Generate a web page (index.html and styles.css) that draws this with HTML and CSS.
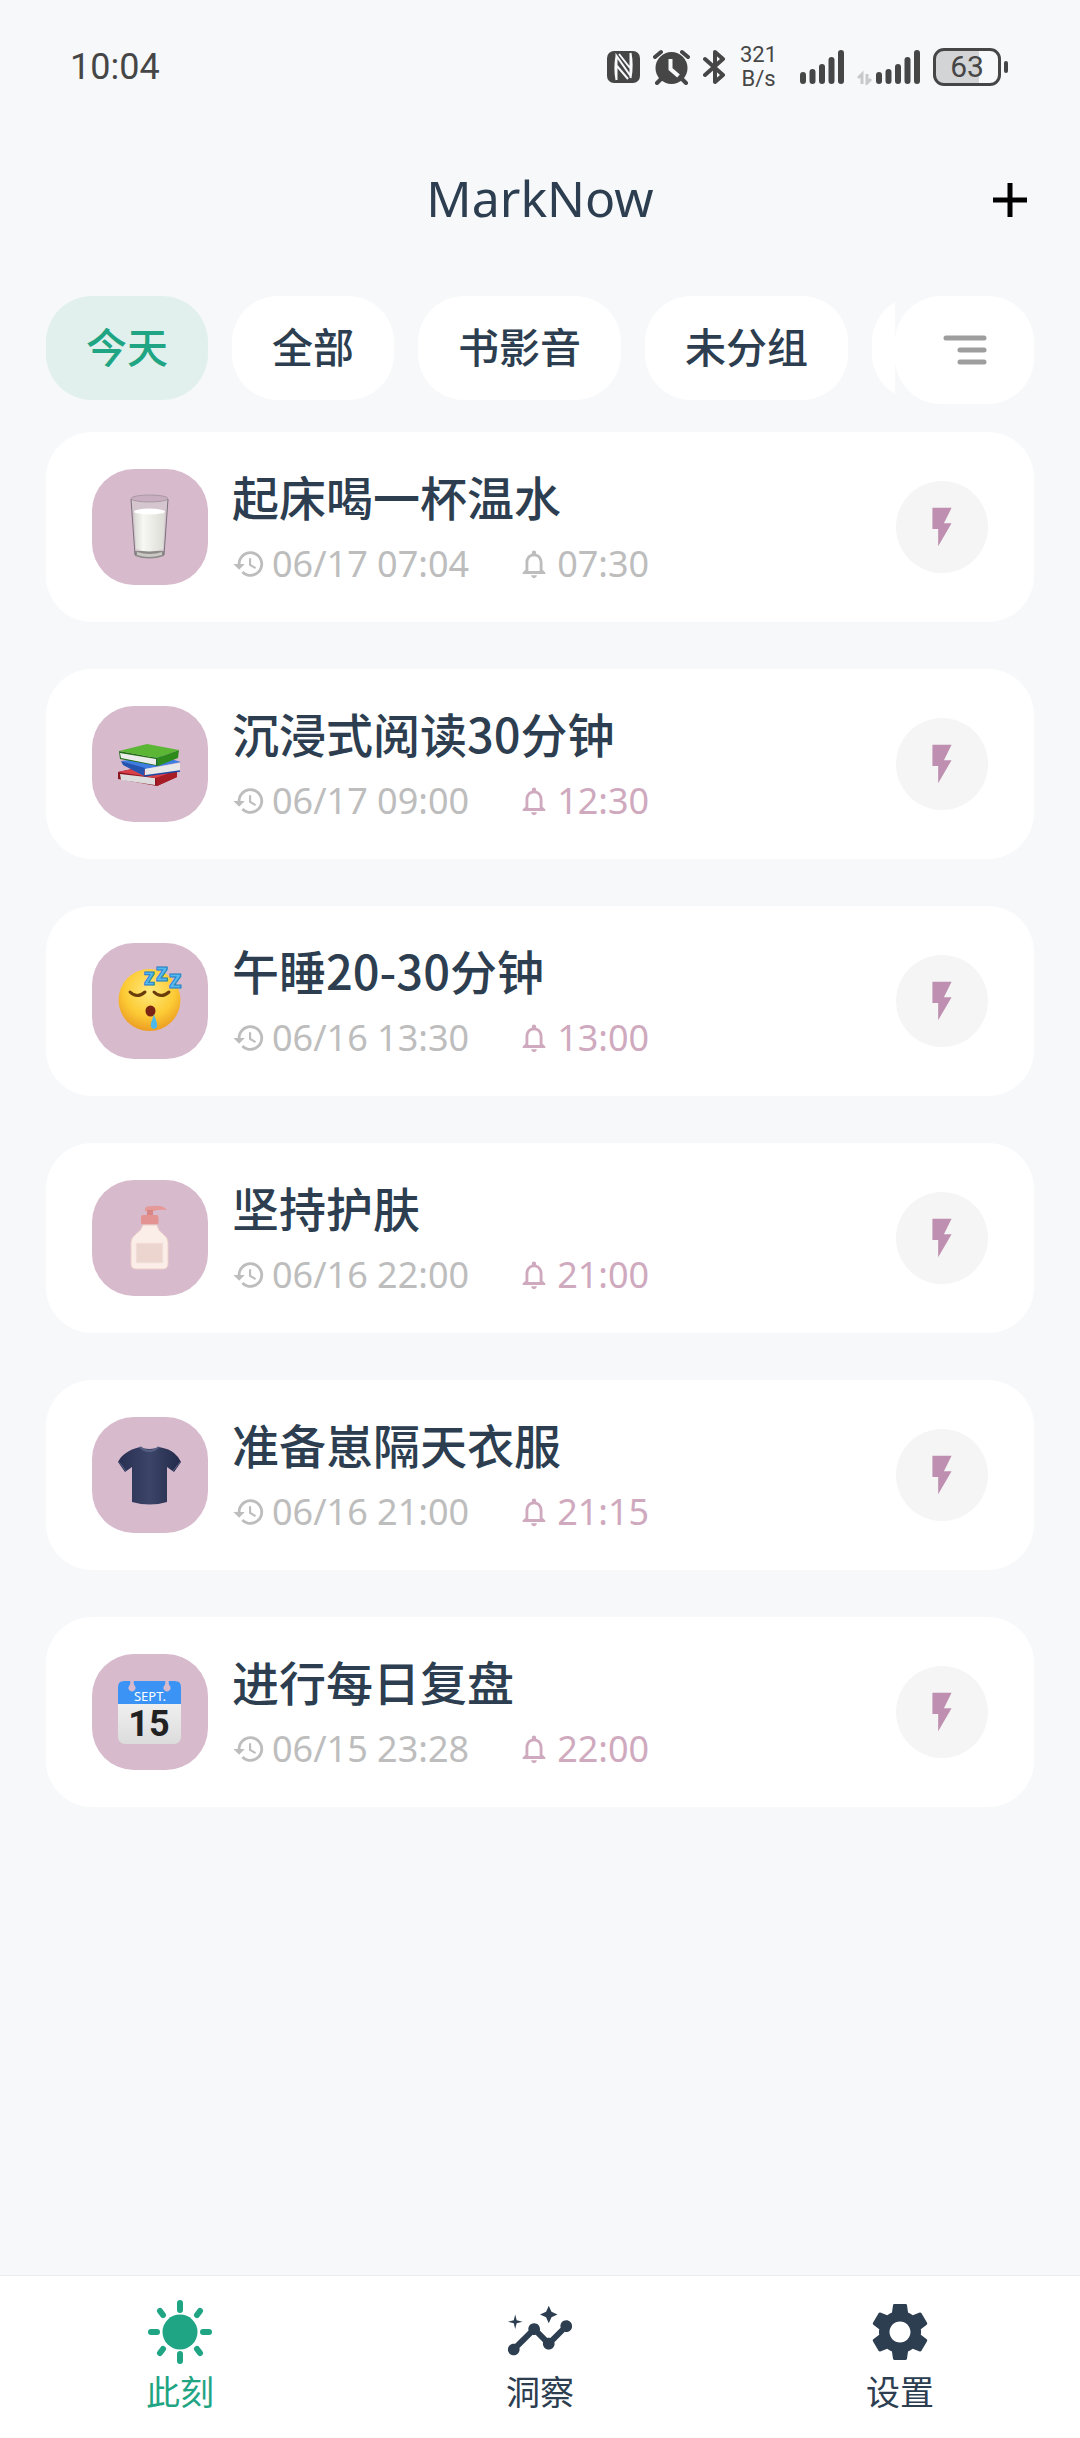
FILE: index.html
```html
<!DOCTYPE html>
<html lang="zh-CN">
<head>
<meta charset="utf-8">
<meta name="viewport" content="width=device-width, initial-scale=1">
<title>MarkNow</title>
<link rel="stylesheet" href="styles.css">
</head>
<body>
<svg class="defs" width="0" height="0" aria-hidden="true">
  <symbol id="i-history" viewBox="0 0 24 24"><path d="M13 3a9 9 0 0 0-9 9H1l3.9 3.9.1.1L9 12H6a7 7 0 1 1 2.05 4.94l-1.42 1.42A9 9 0 1 0 13 3zm-1 5v5l4.28 2.54.72-1.21-3.5-2.08V8z"/></symbol>
  <symbol id="i-bell" viewBox="0 0 24 24"><path d="M12 22c1.1 0 2-.9 2-2h-4c0 1.100.9 2 2 2zm6-6v-5c0-3.070-1.630-5.640-4.500-6.320V4c0-.83-.67-1.500-1.500-1.500s-1.500.67-1.500 1.500v.68C7.640 5.360 6 7.920 6 11v5l-2 2v1h16v-1l-2-2zm-2 1H8v-6c0-2.480 1.510-4.500 4-4.500s4 2.020 4 4.500v6z"/></symbol>
  <symbol id="i-bolt" viewBox="0 0 24 24"><path d="M7 2v11h3v9l7-12h-4l4-8z"/></symbol>
  <symbol id="i-bars" viewBox="0 0 44 36"><path d="M3 26v6M12.500 23v9M22 18v14M31.500 11v21M41 4v28" fill="none" stroke="currentColor" stroke-width="6" stroke-linecap="round"/></symbol>
</svg>

<div class="app">
  <div class="status">
    <span class="status-time">10:04</span>
    <div class="status-icons">
      <svg width="33" height="36" viewBox="0 0 33 36"><rect x="0" y="2" width="33" height="32" rx="7" fill="#464646"/><path d="M9.500 31V7L23.500 27M9.500 7C8 15 8 23 9.500 31M23.500 4v24M23.500 4c1.500 8 1.500 17 0 25M10 17l11 13M12 5l11 14" fill="none" stroke="#f7f9fa" stroke-width="2"/></svg>
      <svg width="37" height="36" viewBox="0 0 37 36"><circle cx="18.500" cy="19" r="16" fill="#464646"/><path d="M2 8l6-5M35 8l-6-5M8 30l-4 4M29 30l4 4" stroke="#464646" stroke-width="4" stroke-linecap="round"/><path d="M17.500 10v10l8 7" fill="none" stroke="#f7f9fa" stroke-width="4"/></svg>
      <svg width="24" height="36" viewBox="0 0 24 36"><path d="M2 10l18 16-8 7V3l8 7L2 26" fill="none" stroke="#464646" stroke-width="4" stroke-linejoin="round" stroke-linecap="round"/></svg>
      <span class="traffic">321<br>B/s</span>
      <svg width="44" height="36"><use href="#i-bars"/></svg>
      <svg width="63" height="36" viewBox="0 0 63 36"><path d="M5 35V25l-4 4M10 25v9l4-4" fill="none" stroke="#c8caca" stroke-width="3"/><use href="#i-bars" x="19" width="44" height="36"/></svg>
      <div class="battery"><div class="battery-cell">63</div><div class="battery-tip"></div></div>
    </div>
  </div>

  <header class="header">
    <h1>MarkNow</h1>
    <button class="add" aria-label="添加"><svg width="34" height="34" viewBox="0 0 34 34"><path d="M17 0v34M0 17h34" stroke="#000" stroke-width="5"/></svg></button>
  </header>

  <div class="filters">
    <div class="chips">
      <button class="chip chip-active">今天</button>
      <button class="chip">全部</button>
      <button class="chip">书影音</button>
      <button class="chip">未分组</button>
      <button class="chip" aria-label="分组"></button>
    </div>
    <button class="sort" aria-label="排序"><svg width="44" height="30" viewBox="0 0 44 30"><path d="M3 3h38M17 15h24M17 27h24" stroke="#9e9e9e" stroke-width="5" stroke-linecap="round"/></svg></button>
  </div>

  <main class="list">
    <article class="card">
      <div class="tile"><svg viewBox="0 0 66 66">
        <defs><linearGradient id="milk"><stop offset="0" stop-color="#d9d9d4"/><stop offset=".3" stop-color="#f7f7f3"/><stop offset="1" stop-color="#dcdcd6"/></linearGradient></defs>
        <path d="M14 4l4 57q15 5 29 0l4-57z" fill="#d5c5cf"/><path d="M18 62q14 5 29 0v-5H18z" fill="#8d8b88"/><path d="M20 58q13 4 25 0v3q-13 4-25 0z" fill="#c9c8c4"/>
        <path d="M17 17l2 38q13 5 27 0l2-38z" fill="url(#milk)"/><ellipse cx="32.500" cy="17.500" rx="15.500" ry="3" fill="#fff"/>
        <ellipse cx="32.500" cy="4.500" rx="18.500" ry="3.500" fill="#c9adc0" stroke="#a79aa2"/>
        <path d="M14 5l4 56M51 5l-4 56" stroke="#77727a" fill="none"/></svg></div>
      <div class="body"><h2>起床喝一杯温水</h2><p class="meta"><span class="stamp"><svg><use href="#i-history"/></svg>06/17 07:04</span><span class="stamp"><svg><use href="#i-bell"/></svg>07:30</span></p></div>
      <button class="punch" aria-label="打卡"><svg><use href="#i-bolt"/></svg></button>
    </article>

    <article class="card">
      <div class="tile"><svg viewBox="0 0 66 66">
        <path d="M1 41l14-3 45 4v4L40 55 1 48z" fill="#8c1620"/><path d="M3 43l35 4v7L4 49z" fill="#ddd"/><path d="M1 41l14-3 45 4-21 5z" fill="#d8404a"/><path d="M39 47l21-8v7L40 55z" fill="#a81c26"/>
        <path d="M4 30l40-5 20 6-36 7z" fill="#3f7de0"/><path d="M4 30l24 7-1 8-21-11z" fill="#2554b0"/><path d="M28 38l35-6v8l-35 5z" fill="#e8e8e8"/><path d="M27 45l36-5" stroke="#1d47a0" stroke-width="1.500"/>
        <path d="M2 20l38 7 1 8L3 28z" fill="#1f6d14"/><path d="M3 22l36 6v6L4 27z" fill="#ececec"/><path d="M2 20l28-7 32 6-22 8z" fill="#5cb636"/><path d="M40 27l22-8-1 8-20 8z" fill="#2f8a1c"/></svg></div>
      <div class="body"><h2>沉浸式阅读30分钟</h2><p class="meta"><span class="stamp"><svg><use href="#i-history"/></svg>06/17 09:00</span><span class="stamp due"><svg><use href="#i-bell"/></svg>12:30</span></p></div>
      <button class="punch" aria-label="打卡"><svg><use href="#i-bolt"/></svg></button>
    </article>

    <article class="card">
      <div class="tile"><svg viewBox="0 0 66 66">
        <defs><radialGradient id="face" cx=".5" cy=".35" r=".68"><stop offset="0" stop-color="#ffe97c"/><stop offset=".6" stop-color="#fccb35"/><stop offset="1" stop-color="#ea9720"/></radialGradient></defs>
        <circle cx="32.500" cy="32" r="31" fill="url(#face)"/><path d="M13 24q7 7 15 0M37 24q7 7 15 0" fill="none" stroke="#6a3c0c" stroke-width="3" stroke-linecap="round"/>
        <ellipse cx="33.500" cy="43" rx="5" ry="5.500" fill="#7a2414"/><path d="M37 46c-1 5-4 9-3 13q3 4 6 0c1-4-2-8-3-13z" fill="#4db9ea"/>
        <g class="zzz"><text x="27" y="17" font-size="17">Z</text><text x="39" y="13" font-size="19">Z</text><text x="52" y="20" font-size="20">Z</text></g></svg></div>
      <div class="body"><h2>午睡20-30分钟</h2><p class="meta"><span class="stamp"><svg><use href="#i-history"/></svg>06/16 13:30</span><span class="stamp due"><svg><use href="#i-bell"/></svg>13:00</span></p></div>
      <button class="punch" aria-label="打卡"><svg><use href="#i-bolt"/></svg></button>
    </article>

    <article class="card">
      <div class="tile"><svg viewBox="0 0 66 66">
        <path d="M28 3q1-2 8-2 10-1 14 4-7-1-13 1H28z" fill="#e59a98"/><rect x="30" y="5" width="6" height="7" fill="#d98583"/><rect x="24" y="10" width="17.500" height="9.500" rx="2" fill="#e39492"/>
        <path d="M26 20h14q1 6 6 9 5 4 5 8v22q0 5-5 5H19q-5 0-5-5V37q0-4 5-8 5-3 7-9z" fill="#fbeee9" stroke="#ecd0c8"/>
        <rect x="19" y="38" width="27" height="20" rx="1" fill="#ecd5ce" stroke="#f6e6e0"/></svg></div>
      <div class="body"><h2>坚持护肤</h2><p class="meta"><span class="stamp"><svg><use href="#i-history"/></svg>06/16 22:00</span><span class="stamp due"><svg><use href="#i-bell"/></svg>21:00</span></p></div>
      <button class="punch" aria-label="打卡"><svg><use href="#i-bolt"/></svg></button>
    </article>

    <article class="card">
      <div class="tile"><svg viewBox="0 0 66 66">
        <defs><linearGradient id="tee"><stop offset="0" stop-color="#272f52"/><stop offset=".5" stop-color="#3c4568"/><stop offset="1" stop-color="#232a4a"/></linearGradient></defs>
        <path d="M23 5q9 4 19 0 11 2 15 6 5 4 7 9l-7 10-7-5v35q-17 5-35 0V25l-7 5-7-10q3-6 8-9 5-4 14-6z" fill="url(#tee)"/><path d="M23 5q9 8 19 0" fill="none" stroke="#566084" stroke-width="2"/><path d="M2 20l7 9M63 20l-7 9" stroke="#566084"/></svg></div>
      <div class="body"><h2>准备崽隔天衣服</h2><p class="meta"><span class="stamp"><svg><use href="#i-history"/></svg>06/16 21:00</span><span class="stamp due"><svg><use href="#i-bell"/></svg>21:15</span></p></div>
      <button class="punch" aria-label="打卡"><svg><use href="#i-bolt"/></svg></button>
    </article>

    <article class="card">
      <div class="tile"><svg viewBox="0 0 66 66">
        <defs><linearGradient id="page" x2="0" y2="1"><stop offset="0" stop-color="#fafafa"/><stop offset="1" stop-color="#dcdcdc"/></linearGradient></defs>
        <rect x="1" y="2" width="63" height="63" rx="7" fill="url(#page)"/><path d="M1 25V8q0-6 6-6h51q6 0 6 6v17z" fill="#3b93f5"/>
        <path d="M13 1h4q-1 4 1 6a3.500 3.500 0 1 1-6 0q2-2 1-6zM48 1h4q-1 4 1 6a3.500 3.500 0 1 1-6 0q2-2 1-6z" fill="#d8bacd"/>
        <text x="33" y="22" class="cal-month">SEPT.</text><text x="32" y="57" class="cal-day">15</text></svg></div>
      <div class="body"><h2>进行每日复盘</h2><p class="meta"><span class="stamp"><svg><use href="#i-history"/></svg>06/15 23:28</span><span class="stamp due"><svg><use href="#i-bell"/></svg>22:00</span></p></div>
      <button class="punch" aria-label="打卡"><svg><use href="#i-bolt"/></svg></button>
    </article>
  </main>

  <nav class="tabs">
    <a class="tab tab-active" href="#now"><svg viewBox="0 0 70 70"><circle cx="35" cy="35" r="17.500"/><path d="M35 6v7M35 57v7M6 35h6M58 35h6M15 14l3 4M52 52l3 4M55 14l-3 4M18 52l-3 4" stroke="currentColor" stroke-width="6" stroke-linecap="round"/></svg>此刻</a>
    <a class="tab" href="#insights"><svg viewBox="0 0 24 24"><path d="M21 8c-1.450 0-2.260 1.440-1.930 2.510l-3.550 3.560c-.3-.09-.74-.09-1.040 0l-2.550-2.550C12.270 10.450 11.460 9 10 9c-1.450 0-2.270 1.440-1.930 2.520l-4.560 4.550C2.440 15.740 1 16.550 1 18c0 1.100.9 2 2 2 1.450 0 2.260-1.440 1.930-2.510l4.550-4.560c.3.09.74.09 1.040 0l2.550 2.550C12.730 16.550 13.540 18 15 18c1.450 0 2.270-1.440 1.930-2.520l3.560-3.550C21.560 12.260 23 11.450 23 10c0-1.100-.9-2-2-2zM15 9l.94-2.070L18 6l-2.060-.93L15 3l-.92 2.070L12 6l2.080.93zM3.500 11L4 9l2-.5L4 8l-.5-2L3 8l-2 .5L3 9z"/></svg>洞察</a>
    <a class="tab" href="#settings"><svg viewBox="0 0 24 24"><path d="M19.140 12.940c.04-.3.06-.61.06-.94 0-.32-.02-.64-.07-.94l2.030-1.580c.18-.14.23-.41.12-.61l-1.920-3.320c-.12-.22-.37-.29-.59-.22l-2.390.96c-.5-.38-1.030-.7-1.620-.94l-.36-2.540c-.04-.24-.24-.41-.48-.41h-3.840c-.24 0-.43.17-.47.41l-.36 2.540c-.59.24-1.130.57-1.620.94l-2.390-.96c-.22-.08-.47 0-.59.22L2.740 8.870c-.12.21-.08.47.12.61l2.030 1.580c-.05.3-.09.63-.09.94s.02.64.07.94l-2.030 1.580c-.18.14-.23.41-.12.61l1.920 3.320c.12.22.37.29.59.22l2.390-.96c.5.38 1.030.7 1.620.94l.36 2.540c.05.24.24.41.48.41h3.840c.24 0 .44-.17.47-.41l.36-2.540c.59-.24 1.130-.56 1.620-.94l2.390.96c.22.08.47 0 .59-.22l1.920-3.320c.12-.22.07-.47-.12-.61l-2.010-1.580zM12 15.600c-1.980 0-3.600-1.620-3.600-3.600s1.620-3.600 3.600-3.600 3.600 1.620 3.600 3.600-1.620 3.600-3.600 3.600z"/></svg>设置</a>
  </nav>
</div>
</body>
</html>
```
FILE: styles.css
```css
* { box-sizing: border-box; }

body {
  margin: 0;
  background: #f6f8fa;
  color: #2c3e50;
  font-family: "Noto Sans", "Noto Sans CJK SC", sans-serif;
}

button {
  border: 0;
  padding: 0;
  background: none;
  color: inherit;
  font: inherit;
}

svg { display: block; flex: none; }
.defs { position: absolute; }

.app {
  min-height: 100vh;
  display: flex;
  flex-direction: column;
}

/* Status bar */
.status {
  display: flex;
  align-items: center;
  justify-content: space-between;
  height: 134px;
  padding: 0 72px 0 70px;
  color: #464646;
}
.status-time {
  font-family: "Roboto", sans-serif;
  font-size: 36px;
}
.status-icons {
  display: flex;
  align-items: center;
  gap: 13px;
}
.traffic {
  width: 37px;
  margin-right: 10px;
  font: 22px/24px "Roboto", sans-serif;
  text-align: center;
}
.battery {
  display: flex;
  align-items: center;
  gap: 3px;
}
.battery-cell {
  width: 68px;
  height: 38px;
  border: 3px solid #464646;
  border-radius: 11px;
  background: linear-gradient(to right, #d2d4d5 70%, transparent 70%);
  font: 30px/32px "Roboto", sans-serif;
  text-align: center;
}
.battery-tip {
  width: 4px;
  height: 12px;
  border-radius: 2px;
  background: #464646;
}

/* Title bar */
.header {
  display: grid;
  grid-template-columns: 1fr auto 1fr;
  align-items: center;
  height: 132px;
  padding: 0 41px;
}
.header h1 {
  grid-column: 2;
  margin: 0;
  padding-bottom: 4px;
  font-size: 50px;
  font-weight: 400;
  line-height: 64px;
}
.add {
  justify-self: end;
  padding: 12px;
}

/* Group filter */
.filters {
  display: flex;
  align-items: flex-start;
  padding: 30px 46px 28px;
}
.chips {
  flex: 1;
  min-width: 0;
  display: flex;
  gap: 24px;
  overflow: hidden;
}
.chip {
  flex: none;
  min-width: 162px;
  height: 104px;
  padding: 0 40px 6px;
  border-radius: 46px;
  background: #fff;
  font-size: 41px;
  font-weight: 500;
  font-family: "Noto Sans CJK SC", sans-serif;
}
.chip-active {
  background: #e1f0ec;
  color: #1fa583;
}
.sort {
  display: grid;
  place-items: center;
  flex: none;
  width: 139px;
  height: 108px;
  border-radius: 46px;
  background: #fff;
}

/* Habit cards */
.list {
  flex: 1;
  display: flex;
  flex-direction: column;
  gap: 47px;
  padding: 0 46px 47px;
}
.card {
  display: flex;
  align-items: center;
  gap: 24px;
  height: 190px;
  padding: 0 46px;
  border-radius: 46px;
  background: #fff;
}
.tile {
  display: grid;
  place-items: center;
  flex: none;
  width: 116px;
  height: 116px;
  border-radius: 42px;
  background: #d8bacd;
}
.tile svg {
  width: 66px;
  height: 66px;
  overflow: visible;
}
.zzz {
  font-family: "Open Sans", sans-serif;
  font-weight: 800;
  fill: #55b9f0;
  stroke: #2380c4;
}
.cal-month {
  font-family: "Noto Sans", sans-serif;
  font-size: 13px;
  fill: #fff;
  text-anchor: middle;
}
.cal-day {
  font-family: "Roboto", sans-serif;
  font-size: 36px;
  font-weight: 700;
  fill: #222;
  text-anchor: middle;
}
.body {
  flex: 1;
  min-width: 0;
  display: grid;
  gap: 8px;
}
.body h2 {
  margin: 0;
  font-family: "Noto Sans CJK SC", sans-serif;
  font-size: 47px;
  font-weight: 500;
  line-height: 66px;
}
.meta {
  display: flex;
  gap: 48px;
  margin: 0;
  font-size: 36px;
  font-weight: 400;
  line-height: 54px;
  color: #bdbdbd;
}
.stamp {
  display: flex;
  align-items: center;
  gap: 6px;
}
.stamp svg {
  width: 34px;
  height: 34px;
  fill: currentColor;
}
.due { color: #cfa9be; }
.punch {
  display: grid;
  place-items: center;
  flex: none;
  width: 92px;
  height: 92px;
  border-radius: 50%;
  background: #f5f5f5;
}
.punch svg {
  width: 46px;
  height: 46px;
  fill: #be8fb1;
}

/* Bottom tabs */
.tabs {
  display: grid;
  grid-template-columns: repeat(3, 1fr);
  padding: 21px 0 23px;
  border-top: 1px solid #e9ebec;
  background: #fff;
}
.tab {
  display: flex;
  flex-direction: column;
  align-items: center;
  color: #2c3e50;
  font-family: "Noto Sans CJK SC", sans-serif;
  font-size: 34px;
  line-height: 48px;
  text-decoration: none;
}
.tab svg {
  width: 70px;
  height: 70px;
  fill: currentColor;
}
.tab-active { color: #1fa583; }
```
